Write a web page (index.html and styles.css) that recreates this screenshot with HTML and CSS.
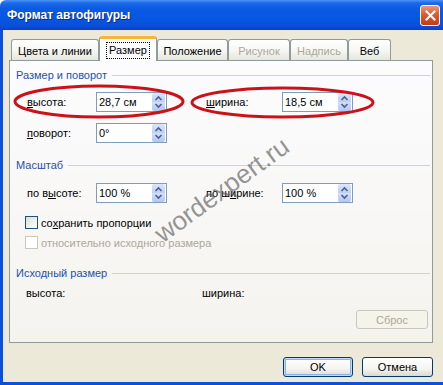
FILE: index.html
```html
<!DOCTYPE html>
<html>
<head>
    <meta charset="utf-8">
    <title>Формат автофигуры</title>
    <link rel="stylesheet" href="styles.css">
</head>
<body>

<div class="window">
    <div class="titlebar">
        <span class="title">Формат автофигуры</span>
        <span class="close">
            <svg width="11" height="11" viewBox="0 0 11 11"><path d="M1.5 1.5 L9.5 9.5 M9.5 1.5 L1.5 9.5" stroke="#fff" stroke-width="2" stroke-linecap="square"/></svg>
        </span>
    </div>

    <div class="client">
        <div class="tabs">
            <div class="tab tab-colors">Цвета и линии</div>
            <div class="tab tab-size tab-active"><span class="focus">Размер</span></div>
            <div class="tab tab-pos">Положение</div>
            <div class="tab tab-pic tab-disabled">Рисунок</div>
            <div class="tab tab-text tab-disabled">Надпись</div>
            <div class="tab tab-web">Веб</div>
        </div>

        <div class="panel">
            <div class="group-title"><span>Размер и поворот</span></div>

            <div class="fields row-first">
                <span><u>в</u>ысота:</span>
                <div class="spin"><span>28,7 см</span><span class="spin-btn"><svg width="13" height="18" viewBox="0 0 13 18"><path d="M3.5 7 L6.5 4 L9.5 7 M3.5 11 L6.5 14 L9.5 11" fill="none" stroke="#4d6185" stroke-width="1.6"/></svg></span></div>
                <span></span>
                <span><u>ш</u>ирина:</span>
                <div class="spin"><span>18,5 см</span><span class="spin-btn"><svg width="13" height="18" viewBox="0 0 13 18"><path d="M3.5 7 L6.5 4 L9.5 7 M3.5 11 L6.5 14 L9.5 11" fill="none" stroke="#4d6185" stroke-width="1.6"/></svg></span></div>
            </div>

            <div class="fields row-next">
                <span><u>п</u>оворот:</span>
                <div class="spin"><span>0°</span><span class="spin-btn"><svg width="13" height="18" viewBox="0 0 13 18"><path d="M3.5 7 L6.5 4 L9.5 7 M3.5 11 L6.5 14 L9.5 11" fill="none" stroke="#4d6185" stroke-width="1.6"/></svg></span></div>
            </div>

            <div class="group-title group-scale"><span>Масштаб</span></div>

            <div class="fields row-first">
                <span>по в<u>ы</u>соте:</span>
                <div class="spin"><span>100 %</span><span class="spin-btn"><svg width="13" height="18" viewBox="0 0 13 18"><path d="M3.5 7 L6.5 4 L9.5 7 M3.5 11 L6.5 14 L9.5 11" fill="none" stroke="#4d6185" stroke-width="1.6"/></svg></span></div>
                <span></span>
                <span>по ш<u>и</u>рине:</span>
                <div class="spin"><span>100 %</span><span class="spin-btn"><svg width="13" height="18" viewBox="0 0 13 18"><path d="M3.5 7 L6.5 4 L9.5 7 M3.5 11 L6.5 14 L9.5 11" fill="none" stroke="#4d6185" stroke-width="1.6"/></svg></span></div>
            </div>

            <div class="check check-first">
                <span class="box"></span>
                <span>со<u>х</u>ранить пропорции</span>
            </div>
            <div class="check check-disabled">
                <span class="box"></span>
                <span>относительно исходного размера</span>
            </div>

            <div class="group-title group-orig"><span>Исходный размер</span></div>

            <div class="orig">
                <span>высота:</span>
                <span>ширина:</span>
            </div>

            <div class="reset-row">
                <span class="btn-reset">Сброс</span>
            </div>
        </div>

        <div class="buttons">
            <button class="btn btn-ok">OK</button>
            <button class="btn btn-cancel">Отмена</button>
        </div>
    </div>

    <span class="watermark">wordexpert.ru</span>

    <svg class="marks" width="443" height="385">
        <ellipse cx="99" cy="101.5" rx="84" ry="15.5"/>
        <ellipse cx="282.5" cy="102.5" rx="90.5" ry="14.5"/>
    </svg>
</div>

</body>
</html>
```

FILE: styles.css
```css
* {
    box-sizing: border-box;
}
BODY {
    margin: 0;
    background: #fff;
    font-family: "Liberation Sans", Arial, sans-serif;
    font-size: 11px;
    color: #000;
}

.window {
    position: relative;
    width: 443px;
    height: 385px;
    display: flex;
    flex-direction: column;
    background: #ece9d8;
    border-top-left-radius: 6px;
    overflow: hidden;
}

/* title bar */
.titlebar {
    flex: none;
    height: 30px;
    display: flex;
    align-items: center;
    justify-content: space-between;
    padding: 0 3px 0 7px;
    background: linear-gradient(#4a92f5 0, #1c6ae8 3px, #0a5ae2 9px, #0556e2 20px, #0a4dd6 27px, #0a40c4 30px);
}
.title {
    color: #fff;
    font-weight: bold;
    font-size: 12px;
    text-shadow: 1px 1px #0b2a8a;
}
.close {
    width: 20px;
    height: 21px;
    border: 1px solid #fff;
    border-radius: 3px;
    background: linear-gradient(#ec9676, #dc5a34 45%, #c63a18);
    display: flex;
    align-items: center;
    justify-content: center;
}

/* dialog body */
.client {
    flex: 1;
    display: flex;
    flex-direction: column;
    border-left: 3px solid #0b50dc;
    border-bottom: 3px solid #0b50dc;
}

.tabs {
    height: 30px;
    display: flex;
    align-items: flex-end;
    padding-left: 8px;
    position: relative;
    z-index: 1;
}
.tab {
    height: 21px;
    border: 1px solid #919b9c;
    border-bottom: none;
    border-radius: 3px 3px 0 0;
    background: linear-gradient(#fff, #f6f6f2 55%, #e6e5de);
    display: flex;
    align-items: center;
    justify-content: center;
    padding-top: 2px;
}
.tab-colors { width: 88px; }
.tab-size { width: 58px; }
.tab-pos { width: 71px; }
.tab-pic { width: 62px; }
.tab-text { width: 58px; }
.tab-web { width: 43px; }
.tab-disabled {
    color: #aca899;
}
.tab-active {
    height: 25px;
    margin-bottom: -1px;
    border-top: 3px solid #f7b43c;
    background: #fcfcfe;
    padding-top: 0;
}
.focus {
    border: 1px dotted #000;
    padding: 1px 2px 2px;
}

.panel {
    height: 283px;
    margin: 0 10px 0 6px;
    border: 1px solid #919b9c;
    background: linear-gradient(#fcfcfe, #f4f3ee);
    display: flex;
    flex-direction: column;
}

.group-title {
    height: 14px;
    margin: 7px 2px 0 6px;
    display: flex;
    align-items: center;
    gap: 5px;
    color: #2350b0;
}
.group-title::after {
    content: "";
    flex: 1;
    border-top: 1px solid #d4d2c4;
}
.group-scale { margin-top: 15px; }
.group-orig { margin-top: 17px; }

.fields {
    display: grid;
    grid-template-columns: 69px 71px 39px 76px 71px;
    align-items: center;
    padding-left: 17px;
}
.row-first { margin-top: 10px; }
.row-next { margin-top: 11px; }
.group-scale + .fields { margin-top: 11px; }

.spin {
    height: 20px;
    border: 1px solid #7f9db9;
    background: #fff;
    display: flex;
    align-items: center;
    justify-content: space-between;
    padding: 0 1px 0 2px;
}
.spin-btn {
    width: 13px;
    height: 18px;
    border-radius: 2px;
    background: linear-gradient(#dbe6fd, #bccff8 50%, #d3e0fc 50%, #b2c6f5);
    display: flex;
}

.check {
    display: flex;
    align-items: center;
    gap: 3px;
    height: 13px;
    padding-left: 15px;
}
.check-first { margin-top: 13px; }
.check-disabled {
    margin-top: 7px;
    color: #aca899;
}
.box {
    width: 13px;
    height: 13px;
    border: 1px solid #1c5180;
    background: linear-gradient(135deg, #dcdcd7, #fff);
}
.check-disabled .box {
    border-color: #cac8bb;
    background: #fff;
}

.orig {
    display: grid;
    grid-template-columns: 176px auto;
    height: 14px;
    align-items: center;
    margin-top: 6px;
    padding-left: 16px;
}

.reset-row {
    display: flex;
    justify-content: flex-end;
    margin-top: 10px;
    padding-right: 4px;
}
.btn-reset {
    width: 72px;
    height: 19px;
    border: 1px solid #c9c7ba;
    border-radius: 3px;
    background: #f5f4ea;
    color: #aca899;
    display: flex;
    align-items: center;
    justify-content: center;
}

.buttons {
    display: flex;
    justify-content: flex-end;
    gap: 9px;
    margin-top: 14px;
    padding-right: 10px;
}
.btn {
    height: 20px;
    padding: 0;
    font: inherit;
    color: #000;
    border: 1px solid #003c74;
    border-radius: 3px;
    background: linear-gradient(#fff, #f4f4f0 60%, #dcd8cd);
}
.btn-ok {
    width: 70px;
    box-shadow: inset 0 0 0 1px #c4d8f8, inset 0 0 0 2px #8eb1e8;
}
.btn-cancel {
    width: 71px;
}

/* overlays: watermark and red marks */
.watermark {
    position: absolute;
    left: 222px;
    top: 190px;
    transform: translate(-50%, -50%) rotate(-36deg);
    font-size: 26px;
    color: rgba(80, 80, 80, 0.6);
    white-space: nowrap;
}
.marks {
    position: absolute;
    left: 0;
    top: 0;
    pointer-events: none;
}
.marks ellipse {
    fill: none;
    stroke: #cc1218;
    stroke-width: 3;
}
```
